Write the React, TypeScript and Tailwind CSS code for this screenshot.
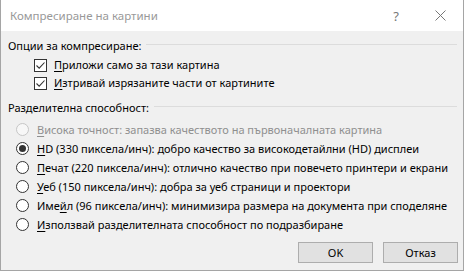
import React from "react";

const font = { fontFamily: '"Noto Sans", "Open Sans", sans-serif' };

function Check() {
  return (
    <span className="w-[13px] h-[13px] border border-[#333333] bg-white flex items-center justify-center shrink-0">
      <svg width="11" height="11" viewBox="0 0 11 11">
        <path d="M1.5 5.5 L4.2 8.2 L9.5 2.5" fill="none" stroke="#333333" strokeWidth="1.1" />
      </svg>
    </span>
  );
}

function Radio({ checked = false, disabled = false }: { checked?: boolean; disabled?: boolean }) {
  return (
    <span
      className={
        "w-[13px] h-[13px] rounded-full border flex items-center justify-center shrink-0 " +
        (disabled ? "border-[#c6c6c6] bg-[#f7f7f7]" : "border-[#333333] bg-white")
      }
    >
      {checked && <span className="w-[7px] h-[7px] rounded-full bg-[#333333]" />}
    </span>
  );
}

function U({ children }: { children: React.ReactNode }) {
  return <span className="underline underline-offset-2">{children}</span>;
}

function Header({ text }: { text: string }) {
  return (
    <div className="h-[16px] flex items-center pl-[7px] pr-[6px]">
      <span className="whitespace-nowrap">{text}</span>
      <span className="flex-1 h-px bg-[#dcdcdc] ml-[5px] -mt-[3px]" />
    </div>
  );
}

function RadioRow({
  checked,
  disabled,
  children,
}: {
  checked?: boolean;
  disabled?: boolean;
  children: React.ReactNode;
}) {
  return (
    <div className={"h-[19px] flex items-center pl-[15px] gap-[8px] whitespace-nowrap " + (disabled ? "text-[#8f8f8f]" : "text-black")}>
      <Radio checked={checked} disabled={disabled} />
      <span>{children}</span>
    </div>
  );
}

export default function App() {
  return (
    <div
      className="w-[464px] h-[271px] border-x border-b border-[#a5a5a5] flex flex-col text-[11px] leading-[16px] text-black overflow-hidden"
      style={font}
    >
      <div className="h-[31px] bg-white flex items-center pl-[9px] shrink-0">
        <span className="text-[#999999] text-[11.5px]">Компресиране на картини</span>
        <span className="flex-1" />
        <span className="text-[#777777] text-[13px] mr-[36px]">?</span>
        <svg width="11" height="11" viewBox="0 0 11 11" className="mr-[17px]">
          <path d="M0.5 0.5 L10.5 10.5 M10.5 0.5 L0.5 10.5" stroke="#777777" strokeWidth="1" />
        </svg>
      </div>
      <div className="flex-1 bg-[#f0f0f0] flex flex-col">
        <div className="mt-[7px]">
          <Header text="Опции за компресиране:" />
        </div>
        <div className="mt-[2px]">
          <div className="h-[18px] flex items-center pl-[33px] gap-[7px] whitespace-nowrap">
            <Check />
            <span>
              <U>П</U>риложи само за тази картина
            </span>
          </div>
          <div className="h-[18px] flex items-center pl-[33px] gap-[7px] whitespace-nowrap">
            <Check />
            <span>
              <U>И</U>зтривай изрязаните части от картините
            </span>
          </div>
        </div>
        <div className="mt-[8px]">
          <Header text="Разделителна способност:" />
        </div>
        <div className="mt-[4px] flex flex-col">
          <RadioRow disabled>
            <U>В</U>исока точност: запазва качеството на първоначалната картина
          </RadioRow>
          <RadioRow checked>
            <U>H</U>D (330 пиксела/инч): добро качество за високодетайлни (HD) дисплеи
          </RadioRow>
          <RadioRow>
            <U>П</U>ечат (220 пиксела/инч): отлично качество при повечето принтери и екрани
          </RadioRow>
          <RadioRow>
            <U>У</U>еб (150 пиксела/инч): добра за уеб страници и проектори
          </RadioRow>
          <RadioRow>
            Име<U>й</U>л (96 пиксела/инч): минимизира размера на документа при споделяне
          </RadioRow>
          <RadioRow>
            <U>И</U>зползвай разделителната способност по подразбиране
          </RadioRow>
        </div>
        <div className="mt-[8px] flex justify-end gap-[10px] pr-[5px]">
          <button className="w-[75px] h-[21px] bg-[#e1e1e1] border border-[#adadad] flex items-center justify-center">
            OK
          </button>
          <button className="w-[75px] h-[21px] bg-[#e1e1e1] border border-[#adadad] flex items-center justify-center">
            Отказ
          </button>
        </div>
      </div>
    </div>
  );
}
